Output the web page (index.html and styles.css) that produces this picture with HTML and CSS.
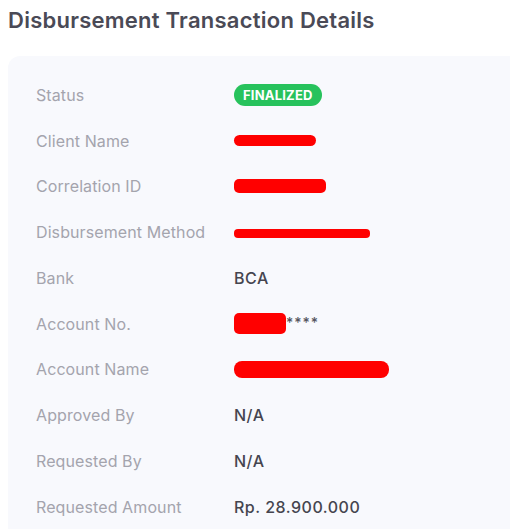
FILE: index.html
```html
<!DOCTYPE html>
<html>
<head>
<meta charset="utf-8">
<link rel="stylesheet" href="styles.css">
</head>
<body>
<div class="page">
  <h1 class="title">Disbursement Transaction Details</h1>
  <div class="card">
    <div class="row"><div class="label">Status</div><div class="value"><span class="badge">FINALIZED</span></div></div>
    <div class="row"><div class="label">Client Name</div><div class="value"><span class="redact r-client"></span></div></div>
    <div class="row"><div class="label">Correlation ID</div><div class="value"><span class="redact r-corr"></span></div></div>
    <div class="row"><div class="label">Disbursement Method</div><div class="value"><span class="redact r-method"></span></div></div>
    <div class="row"><div class="label">Bank</div><div class="value">BCA</div></div>
    <div class="row"><div class="label">Account No.</div><div class="value"><span class="redact r-accno"></span><span class="stars">****</span></div></div>
    <div class="row"><div class="label">Account Name</div><div class="value"><span class="redact r-accname"></span></div></div>
    <div class="row"><div class="label">Approved By</div><div class="value">N/A</div></div>
    <div class="row"><div class="label">Requested By</div><div class="value">N/A</div></div>
    <div class="row"><div class="label">Requested Amount</div><div class="value">Rp. 28.900.000</div></div>
  </div>
</div>
</body>
</html>
```
FILE: styles.css
```css
* { box-sizing: border-box; }
html, body { margin: 0; padding: 0; background: #ffffff; overflow: hidden; }
body { font-family: Inter, "Liberation Sans", sans-serif; }
.page { padding: 7px 0 0 8px; }
.title {
  margin: 0;
  font-size: 22px;
  font-weight: 600;
  color: #4a4a56;
  line-height: 26px;
  letter-spacing: 0.25px;
}
.card {
  margin-top: 23px;
  background: #f8f9fd;
  border-radius: 12px 0 0 0;
  padding: 16px 0 40px 28px;
  display: grid;
  grid-auto-rows: 45.75px;
}
.row {
  display: grid;
  grid-template-columns: 198px 1fr;
  align-items: center;
}
.label {
  font-size: 16px;
  color: #a4a4ad;
  letter-spacing: 0.1px;
}
.value {
  font-size: 16px;
  font-weight: 500;
  color: #45454f;
  letter-spacing: 0.5px;
  display: flex;
  align-items: center;
}
.badge {
  display: inline-block;
  background: #27c25c;
  color: #ffffff;
  font-weight: 700;
  font-size: 13px;
  line-height: 22px;
  height: 22px;
  padding: 0 9px;
  border-radius: 11px;
  letter-spacing: 0.2px;
}
.redact { display: inline-block; background: #ff0000; border-radius: 6px; }
.r-client { width: 82px; height: 11px; }
.r-corr { width: 92px; height: 14px; border-radius: 5px; }
.r-method { width: 136px; height: 9px; border-radius: 4px; margin-top: 2px; }
.r-accno { width: 52px; height: 21px; border-radius: 5px; }
.r-accname { width: 155px; height: 17px; border-radius: 8px; }
.stars { font-size: 14px; color: #55555f; letter-spacing: 1px; margin-top: -3px; }
```
